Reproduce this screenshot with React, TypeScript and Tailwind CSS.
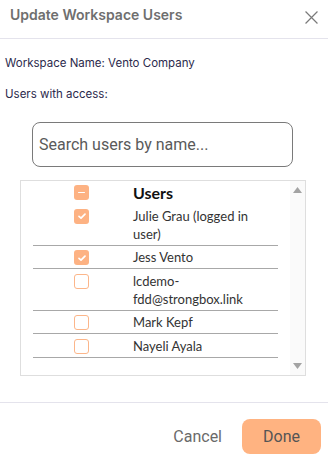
import React from 'react';

type User = { name: string; checked: boolean };

const users: User[] = [
  { name: 'Julie Grau (logged in user)', checked: true },
  { name: 'Jess Vento', checked: true },
  { name: 'lcdemo-fdd@strongbox.link', checked: false },
  { name: 'Mark Kepf', checked: false },
  { name: 'Nayeli Ayala', checked: false },
];

function Checkbox({ state }: { state: 'on' | 'off' | 'mixed' }) {
  if (state === 'off') {
    return <span className="block w-[15px] h-[15px] rounded-[3px] border border-[#fcb68a] bg-white" />;
  }
  return (
    <span className="flex items-center justify-center w-[15px] h-[15px] rounded-[3px] bg-[#fdb283]">
      {state === 'on' ? (
        <svg width="10" height="10" viewBox="0 0 10 10" fill="none">
          <path d="M2 5.3l2 1.8 4-4" stroke="white" strokeWidth="1.7" strokeLinecap="round" strokeLinejoin="round" />
        </svg>
      ) : (
        <span className="block w-[7px] h-[1.6px] bg-white rounded" />
      )}
    </span>
  );
}

export default function App() {
  return (
    <div className="w-[328px] h-[465px] bg-white flex flex-col" style={{ fontFamily: 'Inter, sans-serif' }}>
      {/*Header*/}
      <div className="h-[39px] flex items-center justify-between pl-[10px] pr-[10px] border-b border-[#e4e3ec]">
        <h2 className="text-[14px] font-semibold text-[#6f6f6f] -mt-[9px]">Update Workspace Users</h2>
        <svg width="13" height="13" viewBox="0 0 12 12" className="-mt-[4px]" stroke="#7a7a7a" strokeWidth="1.1">
          <path d="M0.5 0.5l11 11M11.5 0.5l-11 11" />
        </svg>
      </div>
      {/*Body*/}
      <div className="px-[5px] text-[11.5px] leading-[16px] text-[#2c2a4c]">
        <p className="mt-[16px]">Workspace Name: Vento Company</p>
        <p className="mt-[15px]">Users with access:</p>
      </div>
      <div className="ml-[32px] mt-[20px] w-[261px] h-[45px] rounded-[8px] border border-[#7a7a7a] flex items-center px-[6px]">
        <span className="text-[16px] text-[#5a5a5a]" style={{ fontFamily: 'Roboto, sans-serif' }}>
          Search users by name...
        </span>
      </div>
      {/*User list*/}
      <div
        className="ml-[20px] mt-[13px] w-[286px] h-[196px] border border-[#dedede] flex"
        style={{ fontFamily: 'Lato, sans-serif' }}
      >
        <div className="flex-1 pl-[12px] pr-[12px]">
          <div className="flex h-[23px] items-center">
            <div className="w-[97px] flex justify-center">
              <Checkbox state="mixed" />
            </div>
            <span className="pl-[3px] text-[16px] font-bold text-[#111]">Users</span>
          </div>
          {users.map((u) => (
            <div key={u.name} className="flex border-b border-[#a8a8a8] pt-[2.5px] pb-[2px]">
              <div className="w-[97px] flex justify-center pt-[2px]">
                <Checkbox state={u.checked ? 'on' : 'off'} />
              </div>
              <span className="pl-[3px] w-[145px] text-[13px] leading-[18px] text-[#333]">{u.name}</span>
            </div>
          ))}
        </div>
        <div className="w-[15px] bg-[#fafafa] flex flex-col items-center justify-between py-[6px]">
          <svg width="9" height="6" viewBox="0 0 9 6">
            <path d="M4.5 0L9 6H0z" fill="#a3a3a3" />
          </svg>
          <svg width="9" height="6" viewBox="0 0 9 6">
            <path d="M0 0h9L4.5 6z" fill="#a3a3a3" />
          </svg>
        </div>
      </div>
      {/*Footer*/}
      <div className="mt-[26px] border-t border-[#e4e3ec] flex justify-end items-center gap-[20px] pt-[16px] pr-[7px]" style={{ fontFamily: 'Roboto, sans-serif' }}>
        <button className="text-[16px] text-[#6a6a6a]">Cancel</button>
        <button className="w-[79px] h-[35px] rounded-[8px] bg-[#ffb381] text-[16px] text-[#555]">Done</button>
      </div>
    </div>
  );
}
